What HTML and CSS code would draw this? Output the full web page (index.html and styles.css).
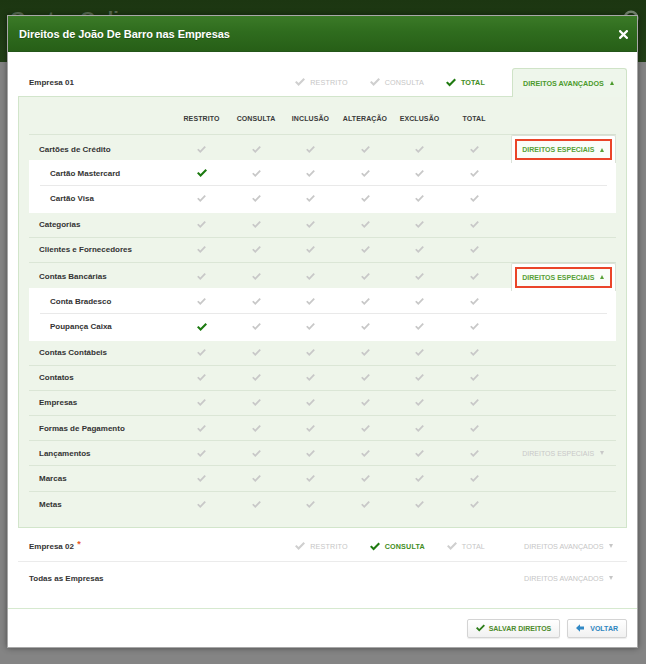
FILE: index.html
```html
<!DOCTYPE html>
<html lang="pt-BR">
<head>
<meta charset="utf-8">
<title>Direitos de João De Barro nas Empresas</title>
<link rel="stylesheet" href="styles.css">
</head>
<body>
<svg class="defs" width="0" height="0" aria-hidden="true">
  <symbol id="chk" viewBox="0 0 10 8"><path d="M0 4.3 L1.5 3 L3.6 5 L8.5 0 L10 1.4 L3.6 7.9 Z"/></symbol>
  <symbol id="arr" viewBox="0 0 8 8"><path d="M0 4 L4 0.3 L4 2.6 L8 2.6 L8 5.4 L4 5.4 L4 7.7 Z"/></symbol>
</svg>

<header class="page-bar">
  <span class="brand">Gestor Online</span>
  <svg class="power" viewBox="0 0 18 18"><circle cx="9" cy="9" r="6.3" fill="none" stroke="#7b8c76" stroke-width="2.6"/></svg>
</header>

<div class="modal">
  <div class="modal-header">
    <h1 class="modal-title">Direitos de João De Barro nas Empresas</h1>
    <svg class="close" viewBox="0 0 9 9"><path d="M1.2 1.2 L7.8 7.8 M7.8 1.2 L1.2 7.8" stroke="#fff" stroke-width="2.3" stroke-linecap="square"/></svg>
  </div>

  <div class="modal-body">
    <div class="company-row first">
      <span class="company-name">Empresa 01</span>
      <div class="opts">
        <span class="opt"><svg class="oi"><use href="#chk"/></svg>RESTRITO</span>
        <span class="opt"><svg class="oi"><use href="#chk"/></svg>CONSULTA</span>
        <span class="opt active"><svg class="oi"><use href="#chk"/></svg>TOTAL</span>
      </div>
      <span class="adv open">DIREITOS AVANÇADOS <i class="tri up"></i></span>
    </div>

    <div class="panel">
      <div class="grid head">
        <span></span>
        <span class="th">RESTRITO</span>
        <span class="th">CONSULTA</span>
        <span class="th">INCLUSÃO</span>
        <span class="th">ALTERAÇÃO</span>
        <span class="th">EXCLUSÃO</span>
        <span class="th">TOTAL</span>
      </div>

      <div class="grid row open">
        <span class="lbl">Cartões de Crédito</span>
        <span class="c"><svg class="ck"><use href="#chk"/></svg></span>
        <span class="c"><svg class="ck"><use href="#chk"/></svg></span>
        <span class="c"><svg class="ck"><use href="#chk"/></svg></span>
        <span class="c"><svg class="ck"><use href="#chk"/></svg></span>
        <span class="c"><svg class="ck"><use href="#chk"/></svg></span>
        <span class="c"><svg class="ck"><use href="#chk"/></svg></span>
        <span class="esp-tab"><span class="esp-btn">DIREITOS ESPECIAIS <i class="tri up"></i></span></span>
      </div>
      <div class="sub">
        <div class="grid srow">
          <span class="lbl">Cartão Mastercard</span>
          <span class="c"><svg class="ck on"><use href="#chk"/></svg></span>
          <span class="c"><svg class="ck"><use href="#chk"/></svg></span>
          <span class="c"><svg class="ck"><use href="#chk"/></svg></span>
          <span class="c"><svg class="ck"><use href="#chk"/></svg></span>
          <span class="c"><svg class="ck"><use href="#chk"/></svg></span>
          <span class="c"><svg class="ck"><use href="#chk"/></svg></span>
        </div>
        <div class="grid srow">
          <span class="lbl">Cartão Visa</span>
          <span class="c"><svg class="ck"><use href="#chk"/></svg></span>
          <span class="c"><svg class="ck"><use href="#chk"/></svg></span>
          <span class="c"><svg class="ck"><use href="#chk"/></svg></span>
          <span class="c"><svg class="ck"><use href="#chk"/></svg></span>
          <span class="c"><svg class="ck"><use href="#chk"/></svg></span>
          <span class="c"><svg class="ck"><use href="#chk"/></svg></span>
        </div>
      </div>

      <div class="grid row">
        <span class="lbl">Categorias</span>
        <span class="c"><svg class="ck"><use href="#chk"/></svg></span>
        <span class="c"><svg class="ck"><use href="#chk"/></svg></span>
        <span class="c"><svg class="ck"><use href="#chk"/></svg></span>
        <span class="c"><svg class="ck"><use href="#chk"/></svg></span>
        <span class="c"><svg class="ck"><use href="#chk"/></svg></span>
        <span class="c"><svg class="ck"><use href="#chk"/></svg></span>
      </div>
      <div class="grid row">
        <span class="lbl">Clientes e Fornecedores</span>
        <span class="c"><svg class="ck"><use href="#chk"/></svg></span>
        <span class="c"><svg class="ck"><use href="#chk"/></svg></span>
        <span class="c"><svg class="ck"><use href="#chk"/></svg></span>
        <span class="c"><svg class="ck"><use href="#chk"/></svg></span>
        <span class="c"><svg class="ck"><use href="#chk"/></svg></span>
        <span class="c"><svg class="ck"><use href="#chk"/></svg></span>
      </div>
      <div class="grid row open">
        <span class="lbl">Contas Bancárias</span>
        <span class="c"><svg class="ck"><use href="#chk"/></svg></span>
        <span class="c"><svg class="ck"><use href="#chk"/></svg></span>
        <span class="c"><svg class="ck"><use href="#chk"/></svg></span>
        <span class="c"><svg class="ck"><use href="#chk"/></svg></span>
        <span class="c"><svg class="ck"><use href="#chk"/></svg></span>
        <span class="c"><svg class="ck"><use href="#chk"/></svg></span>
        <span class="esp-tab"><span class="esp-btn">DIREITOS ESPECIAIS <i class="tri up"></i></span></span>
      </div>
      <div class="sub">
        <div class="grid srow">
          <span class="lbl">Conta Bradesco</span>
          <span class="c"><svg class="ck"><use href="#chk"/></svg></span>
          <span class="c"><svg class="ck"><use href="#chk"/></svg></span>
          <span class="c"><svg class="ck"><use href="#chk"/></svg></span>
          <span class="c"><svg class="ck"><use href="#chk"/></svg></span>
          <span class="c"><svg class="ck"><use href="#chk"/></svg></span>
          <span class="c"><svg class="ck"><use href="#chk"/></svg></span>
        </div>
        <div class="grid srow">
          <span class="lbl">Poupança Caixa</span>
          <span class="c"><svg class="ck on"><use href="#chk"/></svg></span>
          <span class="c"><svg class="ck"><use href="#chk"/></svg></span>
          <span class="c"><svg class="ck"><use href="#chk"/></svg></span>
          <span class="c"><svg class="ck"><use href="#chk"/></svg></span>
          <span class="c"><svg class="ck"><use href="#chk"/></svg></span>
          <span class="c"><svg class="ck"><use href="#chk"/></svg></span>
        </div>
      </div>

      <div class="grid row">
        <span class="lbl">Contas Contábeis</span>
        <span class="c"><svg class="ck"><use href="#chk"/></svg></span>
        <span class="c"><svg class="ck"><use href="#chk"/></svg></span>
        <span class="c"><svg class="ck"><use href="#chk"/></svg></span>
        <span class="c"><svg class="ck"><use href="#chk"/></svg></span>
        <span class="c"><svg class="ck"><use href="#chk"/></svg></span>
        <span class="c"><svg class="ck"><use href="#chk"/></svg></span>
      </div>
      <div class="grid row">
        <span class="lbl">Contatos</span>
        <span class="c"><svg class="ck"><use href="#chk"/></svg></span>
        <span class="c"><svg class="ck"><use href="#chk"/></svg></span>
        <span class="c"><svg class="ck"><use href="#chk"/></svg></span>
        <span class="c"><svg class="ck"><use href="#chk"/></svg></span>
        <span class="c"><svg class="ck"><use href="#chk"/></svg></span>
        <span class="c"><svg class="ck"><use href="#chk"/></svg></span>
      </div>
      <div class="grid row">
        <span class="lbl">Empresas</span>
        <span class="c"><svg class="ck"><use href="#chk"/></svg></span>
        <span class="c"><svg class="ck"><use href="#chk"/></svg></span>
        <span class="c"><svg class="ck"><use href="#chk"/></svg></span>
        <span class="c"><svg class="ck"><use href="#chk"/></svg></span>
        <span class="c"><svg class="ck"><use href="#chk"/></svg></span>
        <span class="c"><svg class="ck"><use href="#chk"/></svg></span>
      </div>
      <div class="grid row">
        <span class="lbl">Formas de Pagamento</span>
        <span class="c"><svg class="ck"><use href="#chk"/></svg></span>
        <span class="c"><svg class="ck"><use href="#chk"/></svg></span>
        <span class="c"><svg class="ck"><use href="#chk"/></svg></span>
        <span class="c"><svg class="ck"><use href="#chk"/></svg></span>
        <span class="c"><svg class="ck"><use href="#chk"/></svg></span>
        <span class="c"><svg class="ck"><use href="#chk"/></svg></span>
      </div>
      <div class="grid row">
        <span class="lbl">Lançamentos</span>
        <span class="c"><svg class="ck"><use href="#chk"/></svg></span>
        <span class="c"><svg class="ck"><use href="#chk"/></svg></span>
        <span class="c"><svg class="ck"><use href="#chk"/></svg></span>
        <span class="c"><svg class="ck"><use href="#chk"/></svg></span>
        <span class="c"><svg class="ck"><use href="#chk"/></svg></span>
        <span class="c"><svg class="ck"><use href="#chk"/></svg></span>
        <span class="esp-link">DIREITOS ESPECIAIS <i class="tri down"></i></span>
      </div>
      <div class="grid row">
        <span class="lbl">Marcas</span>
        <span class="c"><svg class="ck"><use href="#chk"/></svg></span>
        <span class="c"><svg class="ck"><use href="#chk"/></svg></span>
        <span class="c"><svg class="ck"><use href="#chk"/></svg></span>
        <span class="c"><svg class="ck"><use href="#chk"/></svg></span>
        <span class="c"><svg class="ck"><use href="#chk"/></svg></span>
        <span class="c"><svg class="ck"><use href="#chk"/></svg></span>
      </div>
      <div class="grid row last">
        <span class="lbl">Metas</span>
        <span class="c"><svg class="ck"><use href="#chk"/></svg></span>
        <span class="c"><svg class="ck"><use href="#chk"/></svg></span>
        <span class="c"><svg class="ck"><use href="#chk"/></svg></span>
        <span class="c"><svg class="ck"><use href="#chk"/></svg></span>
        <span class="c"><svg class="ck"><use href="#chk"/></svg></span>
        <span class="c"><svg class="ck"><use href="#chk"/></svg></span>
      </div>
    </div>

    <div class="company-row second">
      <span class="company-name">Empresa 02 <sup class="star">*</sup></span>
      <div class="opts">
        <span class="opt"><svg class="oi"><use href="#chk"/></svg>RESTRITO</span>
        <span class="opt active"><svg class="oi"><use href="#chk"/></svg>CONSULTA</span>
        <span class="opt"><svg class="oi"><use href="#chk"/></svg>TOTAL</span>
      </div>
      <span class="adv">DIREITOS AVANÇADOS <i class="tri down"></i></span>
    </div>

    <div class="company-row all">
      <span class="company-name">Todas as Empresas</span>
      <span class="adv">DIREITOS AVANÇADOS <i class="tri down"></i></span>
    </div>
  </div>

  <div class="modal-footer">
    <button class="btn save"><svg class="bi"><use href="#chk"/></svg>SALVAR DIREITOS</button>
    <button class="btn back"><svg class="bi arrow"><use href="#arr"/></svg>VOLTAR</button>
  </div>
</div>
</body>
</html>
```

FILE: styles.css
```css
* {
  box-sizing: border-box;
  margin: 0;
  padding: 0;
}

body {
  width: 646px;
  height: 664px;
  overflow: hidden;
  position: relative;
  background: #848484;
  font-family: "Liberation Sans", Arial, sans-serif;
  color: #333;
}

.defs {
  position: absolute;
  width: 0;
  height: 0;
}

/* page behind the overlay */
.page-bar {
  height: 62px;
  background: linear-gradient(180deg, #1c3611 0%, #223f18 100%);
  display: flex;
  justify-content: space-between;
  align-items: flex-start;
  padding: 9px 6px 0 10px;
}

.brand {
  display: block;
  height: 6px;
  overflow: hidden;
  font-size: 20px;
  line-height: 20px;
  font-weight: bold;
  color: #5a6d53;
}

.power {
  width: 18px;
  height: 18px;
}

/* modal */
.modal {
  position: absolute;
  left: 7px;
  top: 15px;
  width: 631px;
  background: #fff;
  border: 1px solid #a8a8a8;
  box-shadow: 0 0 6px rgba(0, 0, 0, 0.45);
}

.modal-header {
  height: 36px;
  display: flex;
  align-items: center;
  justify-content: space-between;
  padding: 0 9px 0 11px;
  background: linear-gradient(180deg, #3b7a27 0%, #2f6c1e 45%, #275f17 100%);
  border-bottom: 1px solid #24561a;
}

.modal-title {
  font-size: 11px;
  font-weight: bold;
  color: #fff;
  letter-spacing: -0.05px;
  text-shadow: 0 1px 0 rgba(0, 0, 0, 0.25);
}

.close {
  width: 9px;
  height: 9px;
  margin-top: 1px;
}

.modal-body {
  padding: 16px 10px 14px 10px;
}

/* company rows */
.company-row {
  display: flex;
  align-items: center;
  height: 28px;
  padding-left: 11px;
}

.company-row.second {
  height: 34px;
  padding-top: 4px;
  border-bottom: 1px solid #ebebeb;
}

.company-row.all {
  height: 32px;
  padding-top: 1px;
}

.company-name {
  font-size: 8px;
  font-weight: bold;
  color: #333;
}

.star {
  color: #e8581f;
  font-size: 9px;
  line-height: 0;
  vertical-align: 2px;
  margin-left: 1px;
}

.opts {
  margin-left: auto;
  display: flex;
  gap: 22px;
}

.opt {
  display: flex;
  align-items: center;
  gap: 5px;
  font-size: 7.2px;
  letter-spacing: 0.15px;
  color: #c6c6c6;
  fill: #cfcfcf;
}

.opt.active {
  color: #3f8d22;
  fill: #1f7a10;
  font-weight: bold;
}

.oi {
  width: 10px;
  height: 8px;
}

.opt.active .oi {
  width: 10px;
  height: 9px;
}

.adv {
  display: flex;
  align-items: center;
  gap: 6px;
  width: 115px;
  height: 28px;
  margin-left: 27px;
  padding-left: 12px;
  font-size: 7.2px;
  color: #c6c6c6;
  white-space: nowrap;
}

.company-row.all .adv {
  margin-left: auto;
}

.adv.open {
  position: relative;
  z-index: 1;
  align-self: flex-end;
  margin-bottom: -1px;
  height: 29px;
  padding-left: 10px;
  background: #eef6eb;
  border: 1px solid #cfe3c7;
  border-bottom: none;
  border-radius: 3px 3px 0 0;
  color: #4b9a2c;
  font-weight: bold;
}

.tri {
  display: inline-block;
  width: 0;
  height: 0;
  border-left: 2.5px solid transparent;
  border-right: 2.5px solid transparent;
}

.tri.up {
  border-bottom: 4px solid currentColor;
}

.tri.down {
  border-top: 4px solid currentColor;
}

/* panel */
.panel {
  background: #eef5ea;
  border: 1px solid #d2e5cb;
  padding: 0 10px 10px 10px;
}

.grid {
  display: grid;
  grid-template-columns: 145.25px repeat(6, 54.5px) 1fr;
  align-items: center;
}

.head {
  height: 38px;
  padding-top: 5px;
  border-bottom: 1px solid #dbe6d6;
}

.th {
  text-align: center;
  font-size: 7px;
  font-weight: bold;
  color: #3a3a3a;
  letter-spacing: 0.1px;
}

.row {
  height: 25.2px;
  border-bottom: 1px solid #dbe6d6;
}

.row.open,
.row.last {
  border-bottom: none;
}

.lbl {
  padding-left: 10px;
  font-size: 8px;
  font-weight: bold;
  color: #333;
  white-space: nowrap;
}

.c {
  display: flex;
  justify-content: center;
  align-items: center;
}

.ck {
  width: 9px;
  height: 7px;
  fill: #c8c8c8;
}

.ck.on {
  width: 10px;
  height: 8px;
  fill: #1c7a10;
}

.sub {
  background: #fff;
  padding: 1px 0;
}

.srow {
  grid-template-columns: 134.25px repeat(6, 54.5px) 1fr;
  height: 25.2px;
  margin: 0 9px 0 11px;
  border-bottom: 1px solid #e9e9e9;
}

.srow:last-child {
  border-bottom: none;
}

/* special rights */
.esp-tab {
  align-self: end;
  height: 28px;
  margin-left: 10px;
  padding: 3px 3px 0 3px;
  background: #fff;
  border: 1px solid #dbe2d8;
  border-bottom: none;
  border-radius: 2px 2px 0 0;
  box-shadow: 0 -1px 1px rgba(0, 0, 0, 0.03);
}

.esp-btn {
  display: flex;
  align-items: center;
  gap: 6px;
  height: 21px;
  padding-left: 5px;
  border: 2px solid #ea4429;
  background: #fafcf9;
  font-size: 7px;
  font-weight: bold;
  color: #58a036;
  white-space: nowrap;
}

.esp-link {
  display: flex;
  align-items: center;
  gap: 6px;
  margin-left: 21px;
  font-size: 7px;
  color: #c8c8c8;
  white-space: nowrap;
}

/* footer */
.modal-footer {
  display: flex;
  justify-content: flex-end;
  gap: 7px;
  padding: 10px 10px 9px;
  border-top: 1px solid #d6e9cf;
}

.btn {
  display: flex;
  align-items: center;
  gap: 4px;
  height: 19px;
  padding: 0 8px;
  background: linear-gradient(180deg, #ffffff 0%, #f1f1f1 100%);
  border: 1px solid #d4d4d4;
  border-radius: 2px;
  box-shadow: 0 1px 1px rgba(0, 0, 0, 0.08);
  font-family: "Liberation Sans", Arial, sans-serif;
  font-size: 7px;
  font-weight: bold;
  cursor: pointer;
}

.btn.save {
  color: #4d8b2b;
  fill: #2c7d18;
}

.btn.back {
  gap: 6px;
  color: #2e86c0;
  fill: #3189c6;
}

.bi {
  width: 9px;
  height: 8px;
}

.bi.arrow {
  width: 8px;
  height: 8px;
}
```
